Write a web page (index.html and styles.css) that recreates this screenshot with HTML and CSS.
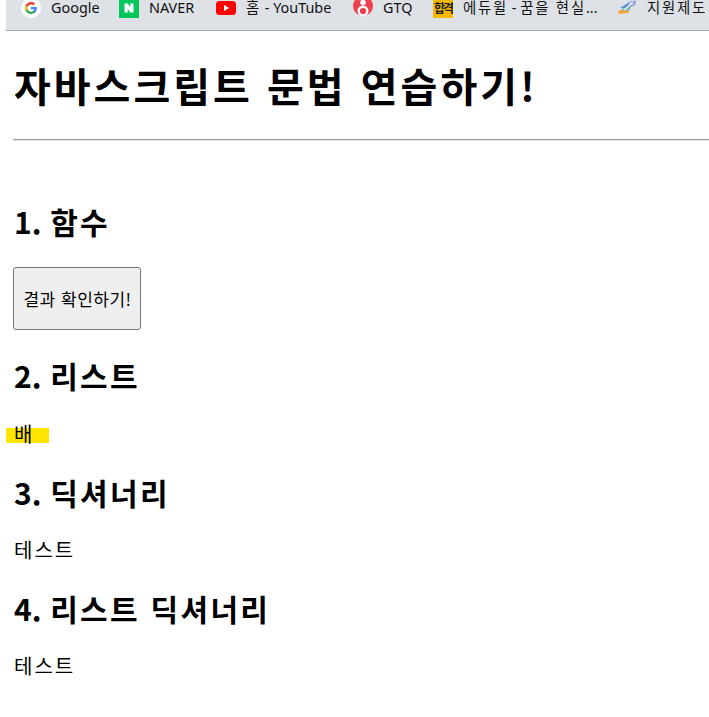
FILE: index.html
```html
<!DOCTYPE html>
<html lang="ko">
<head>
    <meta charset="utf-8">
    <title>자바스크립트 문법 연습하기!</title>
    <link rel="stylesheet" href="styles.css">
</head>
<body>
    <div class="bookmarks">
        <a class="mark mark-google">
            <svg class="icon" viewBox="0 0 20 20"><circle cx="10" cy="10" r="10" fill="#fff"/><path d="M15.8 10.2c0-.5 0-.9-.1-1.300H10v2.400h3.300c-.2.800-.6 1.400-1.200 1.900v1.500h2c1.100-1.100 1.700-2.600 1.700-4.500z" fill="#4285f4"/><path d="M10 16c1.600 0 3-.5 4.100-1.400l-2-1.500c-.5.400-1.200.6-2.100.6-1.600 0-2.900-1.100-3.400-2.500h-2v1.600C5.600 14.700 7.600 16 10 16z" fill="#34a853"/><path d="M6.600 11.200c-.3-.8-.3-1.600 0-2.400V7.200h-2c-.8 1.700-.8 3.900 0 5.600l2-1.600z" fill="#fbbc05"/><path d="M10 6.400c.9 0 1.700.3 2.300.9l1.800-1.800C13 4.500 11.600 4 10 4 7.600 4 5.600 5.300 4.600 7.200l2 1.600c.5-1.400 1.800-2.400 3.400-2.400z" fill="#ea4335"/></svg>
            <span>Google</span>
        </a>
        <a class="mark mark-naver">
            <svg class="icon" viewBox="0 0 20 20"><rect width="20" height="20" fill="#03c75a"/><path d="M5.500 5.500h3.300l2.500 3.700V5.500h3.200v9h-3.300L8.700 10.800v3.700H5.500z" fill="#fff"/></svg>
            <span>NAVER</span>
        </a>
        <a class="mark mark-youtube">
            <svg class="icon" viewBox="0 0 20 20"><rect y="3" width="20" height="14" rx="3.500" fill="#f00"/><path d="M8 7l5.200 3L8 13z" fill="#fff"/></svg>
            <span><span class="ko">홈</span> - YouTube</span>
        </a>
        <a class="mark mark-gtq">
            <svg class="icon" viewBox="0 0 20 20"><circle cx="10" cy="8" r="10" fill="#f0404f"/><circle cx="10" cy="4.500" r="2.800" fill="#fff"/><circle cx="10" cy="13" r="4.300" fill="none" stroke="#fff" stroke-width="2.400"/></svg>
            <span>GTQ</span>
        </a>
        <a class="mark mark-edu">
            <span class="pass-icon">합격</span>
            <span><span class="ko">에듀윌</span> - <span class="ko">꿈을 현실</span>...</span>
        </a>
        <a class="mark mark-support">
            <svg class="icon" viewBox="0 0 20 20"><path d="M3 10l11-7 5 0-1 4-9 4z" fill="#5b8fd0"/><path d="M12 4l6-2-1 5-4 1z" fill="#b7b4ec"/><path d="M1 13l9-3 4-1-3 6-9 1z" fill="#f2a33a"/><path d="M6 11l8-3-2 4-6 1z" fill="#67bcd6"/><path d="M7 12l8-7" stroke="#fff" stroke-width="1.200"/></svg>
            <span class="ko">지원제도</span>
        </a>
    </div>

    <div class="page">
        <h1>자바스크립트 문법 연습하기!</h1>
        <hr>
        <h2 class="first"><span class="num">1.</span> 함수</h2>
        <button class="check">결과 확인하기!</button>
        <h2 class="after-button"><span class="num">2.</span> 리스트</h2>
        <p class="highlight">배</p>
        <h2><span class="num">3.</span> 딕셔너리</h2>
        <p>테스트</p>
        <h2><span class="num">4.</span> 리스트 딕셔너리</h2>
        <p>테스트</p>
    </div>
</body>
</html>
```

FILE: styles.css
```css
html, body {
    margin: 0;
    padding: 0;
    overflow: hidden;
}
body {
    background: #fff;
    color: #000;
    font-family: "Noto Sans CJK KR", "Liberation Sans", sans-serif;
    font-size: 20px;
}
.bookmarks {
    display: flex;
    align-items: flex-start;
    height: 30px;
    margin-left: 6px;
    padding-left: 15px;
    background: #dee1e6;
    border-bottom: 1px solid #a9abb0;
    font-family: "Noto Sans", "Noto Sans CJK KR", sans-serif;
    font-size: 14.400px;
    line-height: 16px;
    white-space: nowrap;
}
.mark {
    display: flex;
    align-items: center;
    flex: none;
    gap: 10px;
    height: 16px;
    color: #111;
}
.mark-google { width: 98px; }
.mark-naver { width: 97px; }
.mark-youtube { width: 137px; }
.mark-gtq { width: 80px; }
.mark-edu { width: 184px; }
.mark-support { width: 92px; overflow: hidden; }
.ko {
    letter-spacing: 1.800px;
}
.icon {
    width: 20px;
    height: 20px;
    flex: none;
}
.pass-icon {
    display: flex;
    align-items: center;
    justify-content: center;
    align-self: flex-start;
    flex: none;
    width: 20px;
    height: 18px;
    background: #f9b800;
    font-size: 12px;
    font-weight: 700;
    line-height: 12px;
    letter-spacing: -2px;
    color: #222;
    overflow: hidden;
}
.page {
    padding-left: 13px;
}
h1 {
    margin: 0;
    padding: 22px 0 22px 1px;
    font-size: 40px;
    line-height: 64px;
    font-weight: 700;
    letter-spacing: 3px;
}
hr {
    margin: 0;
    width: 720px;
    border: 0;
    border-top: 1px solid #9a9a9a;
    border-bottom: 1px solid #e4e4e4;
}
h2 {
    margin: 21px 0 0;
    padding-left: 1px;
    font-size: 30px;
    line-height: 44px;
    font-weight: 700;
    letter-spacing: 2.300px;
}
h2.first {
    margin-top: 58px;
}
h2.after-button {
    margin-top: 23px;
}
.num {
    margin-right: -2px;
    letter-spacing: 0;
}
p {
    margin: 21px 0 0;
    padding-left: 1px;
    font-size: 20px;
    line-height: 30px;
    letter-spacing: 2px;
}
.check {
    display: block;
    width: 128px;
    height: 63px;
    margin-top: 24px;
    padding: 0 0 0 1px;
    background: #efefef;
    border: 1px solid #767676;
    border-radius: 3px;
    color: #000;
    font-family: inherit;
    font-size: 17px;
    letter-spacing: 0.500px;
}
.highlight {
    width: 43px;
    margin-top: 22px;
    margin-left: -7px;
    padding-left: 8px;
    box-sizing: border-box;
    background: linear-gradient(#ffe600, #ffe600) no-repeat 0 9px / 100% 15px;
}
```
